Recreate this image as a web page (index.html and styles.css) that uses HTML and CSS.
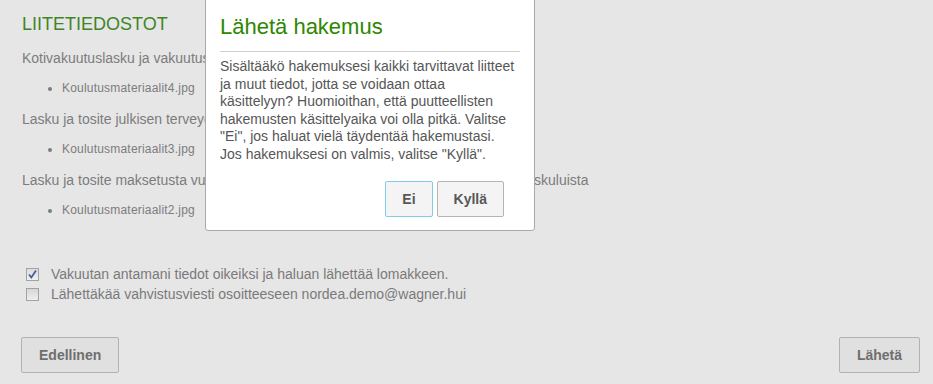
FILE: index.html
```html
<!DOCTYPE html>
<html lang="fi">
<head>
<meta charset="UTF-8">
<title>Lähetä hakemus</title>
<link rel="stylesheet" href="styles.css">
</head>
<body>
<div class="page">
  <h2 class="section-title">LIITETIEDOSTOT</h2>

  <div class="attachment">
    <p>Kotivakuutuslasku ja vakuutusehdot</p>
    <ul><li>Koulutusmateriaalit4.jpg</li></ul>
  </div>
  <div class="attachment">
    <p>Lasku ja tosite julkisen terveydenhuollon käynnistä</p>
    <ul><li>Koulutusmateriaalit3.jpg</li></ul>
  </div>
  <div class="attachment">
    <p>Lasku ja tosite maksetusta vuokrasta, vastikkeesta, vesi, sähköstä ja muista asumiskuluista</p>
    <ul><li>Koulutusmateriaalit2.jpg</li></ul>
  </div>

  <div class="confirm">
    <label class="check-row">
      <span class="box checked"><svg width="11" height="11" viewBox="0 0 11 11"><path d="M2 5.5 L4.3 8.5 L9 1.5" fill="none" stroke="#4b5e9c" stroke-width="1.8"/></svg></span>
      Vakuutan antamani tiedot oikeiksi ja haluan lähettää lomakkeen.
    </label>
    <label class="check-row">
      <span class="box"></span>
      Lähettäkää vahvistusviesti osoitteeseen nordea.demo@wagner.hui
    </label>
  </div>

  <div class="nav-buttons">
    <button class="page-btn">Edellinen</button>
    <button class="page-btn">Lähetä</button>
  </div>
</div>

<div class="modal">
  <h3 class="modal-title">Lähetä hakemus</h3>
  <p class="modal-text">Sisältääkö hakemuksesi kaikki tarvittavat liitteet ja muut tiedot, jotta se voidaan ottaa käsittelyyn? Huomioithan, että puutteellisten hakemusten käsittelyaika voi olla pitkä. Valitse "Ei", jos haluat vielä täydentää hakemustasi. Jos hakemuksesi on valmis, valitse "Kyllä".</p>
  <div class="modal-buttons">
    <button class="modal-btn focus">Ei</button>
    <button class="modal-btn">Kyllä</button>
  </div>
</div>
</body>
</html>
```

FILE: styles.css
```css
body{margin:0;background:#e6e6e6;font-family:"Liberation Sans",Arial,sans-serif;color:#7c7c7c;overflow:hidden}
.page{padding:13px 13px 0 22px;position:relative}
.section-title{font-size:18px;line-height:22px;font-weight:normal;color:#3f8526;margin:0 0 13px}
.attachment p{margin:0;font-size:14px;line-height:20px;white-space:nowrap}
.attachment ul{margin:12px 0 13px;padding-left:40px;font-size:12px;line-height:16px;letter-spacing:0.2px}
.confirm{margin-top:46px;display:flex;flex-direction:column}
.check-row{display:flex;align-items:center;font-size:14px;line-height:20px;color:#7a7a7a}
.box{width:11px;height:11px;border:1px solid #a2a2a2;background:linear-gradient(#d6d6d6,#eeeeee);margin:0 12px 0 4px;display:flex;align-items:center;justify-content:center}
.box.checked{background:linear-gradient(#dcdcdc,#f0f0f0)}
.nav-buttons{display:flex;justify-content:space-between;margin-top:33px}
.page-btn{height:36px;padding:0 17px;border:1px solid #b2b2b2;border-radius:2px;background:#e0e0e0;font-family:inherit;font-size:14px;font-weight:bold;color:#6e6e6e}
.page-btn:first-child{margin-left:-1px}
.modal{position:absolute;left:205px;top:-10px;width:300px;padding:23px 14px 13px;background:#fff;border:1px solid #a9a9a9;border-radius:3px}
.modal-title{margin:0;font-size:22px;line-height:26px;font-weight:normal;color:#2e8700;padding-bottom:11px;border-bottom:1px solid #cfcfcf}
.modal-text{margin:6px 0 0;font-size:14px;line-height:17.6px;color:#565656}
.modal-buttons{display:flex;justify-content:flex-end;gap:4px;margin-top:17px;padding-right:16px}
.modal-btn{height:36px;padding:0 16px;border:1px solid #b4b4b4;border-radius:2px;background:#f4f4f4;font-family:inherit;font-size:14px;font-weight:bold;color:#585858}
.modal-btn.focus{border-color:#80cdea}
```
